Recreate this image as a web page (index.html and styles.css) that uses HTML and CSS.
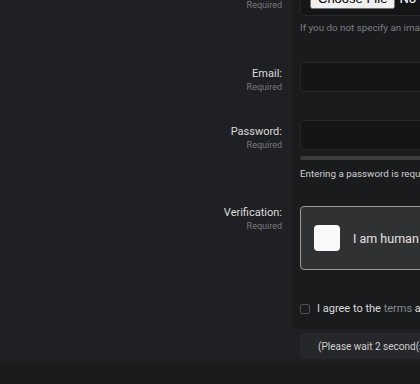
FILE: index.html
```html
<!doctype html>
<html lang="en">
  <head>
    <meta charset="UTF-8" />
    <meta name="viewport" content="width=device-width, initial-scale=1.0" />
    <title>Register</title>
    <link rel="stylesheet" href="styles.css">
  </head>
  <body>
    <div class="page">
      <form class="block-form">
        <div class="form-row">
          <div class="form-label">
            <label for="avatar">Avatar:</label>
            <span class="req">Required</span>
          </div>
          <div class="form-field">
            <div class="file-box">
              <input type="file" id="avatar" name="avatar" />
            </div>
            <p class="hint">If you do not specify an image, a default avatar will be used.</p>
          </div>
        </div>

        <div class="form-row">
          <div class="form-label">
            <label for="email">Email:</label>
            <span class="req">Required</span>
          </div>
          <div class="form-field">
            <input type="email" id="email" class="text-input" />
          </div>
        </div>

        <div class="form-row form-row--pw">
          <div class="form-label">
            <label for="password">Password:</label>
            <span class="req">Required</span>
          </div>
          <div class="form-field">
            <input type="password" id="password" class="text-input" />
            <div class="meter"></div>
            <p class="hint hint--pw">Entering a password is required.</p>
          </div>
        </div>

        <div class="form-row form-row--captcha">
          <div class="form-label form-label--top">
            <label>Verification:</label>
            <span class="req">Required</span>
          </div>
          <div class="form-field">
            <div class="captcha">
              <span class="captcha-check"></span>
              <span class="captcha-text">I am human</span>
            </div>
          </div>
        </div>

        <div class="form-row form-row--agree">
          <div class="form-label"></div>
          <div class="form-field">
            <label class="agree">
              <span class="agree-box"></span>
              <span>I agree to the <a href="#">terms</a> and privacy policy.</span>
            </label>
          </div>
        </div>

        <div class="form-submit">
          <button type="button" class="wait-btn">(Please wait 2 second(s).)</button>
        </div>
      </form>
    </div>
    <div class="footer"></div>
  </body>
</html>
```

FILE: styles.css
```css
* {
  margin: 0;
  padding: 0;
  box-sizing: border-box;
}

body {
  font-family: Roboto, "Liberation Sans", sans-serif;
  background: #1a1b1d;
  color: #d8d8d8;
  overflow: hidden;
  width: 420px;
  height: 384px;
}

.page {
  background: #1f2023;
  margin-top: -34px;
  padding-bottom: 4px;
}

.form-row {
  display: grid;
  grid-template-columns: 292px 1fr;
}

.form-label {
  text-align: right;
  padding: 19px 10px 0 0;
}

.form-label--top {
  padding-top: 14px;
}

.form-label label {
  display: block;
  font-size: 11px;
  line-height: 14px;
  color: #dcdcdc;
}

.req {
  display: block;
  font-size: 9px;
  line-height: 12px;
  color: #777a7e;
}

.form-field {
  background: #1a1b1d;
  padding: 14px 0 14px 8px;
  overflow: hidden;
  white-space: nowrap;
}

/* avatar upload */
.file-box {
  width: 400px;
  height: 36px;
  background: #141517;
  border: 1px solid #27282b;
  border-radius: 4px;
  display: flex;
  align-items: center;
  padding-left: 9px;
}

.file-box input {
  color: #fff;
  font-family: Roboto, "Liberation Sans", sans-serif;
  font-size: 13px;
}

.hint {
  font-size: 9.8px;
  line-height: 12px;
  color: #7b7e82;
  margin-top: 6px;
}

.text-input {
  display: block;
  width: 400px;
  height: 30px;
  background: #141517;
  border: 1px solid #27282b;
  border-radius: 4px;
}

.form-row--pw .form-field {
  padding-bottom: 12px;
}

.meter {
  width: 400px;
  height: 4px;
  margin-top: 6px;
  background: #3b3c3f;
  border-radius: 2px;
}

.hint--pw {
  margin-top: 8px;
  color: #d0d0d0;
}

/* captcha */
.captcha {
  width: 300px;
  height: 64px;
  background: #303133;
  border: 1px solid #9a9a9a;
  border-radius: 4px;
  display: flex;
  align-items: center;
  padding-left: 13px;
  gap: 13px;
}

.captcha-check {
  width: 26px;
  height: 26px;
  background: #f9f9f9;
  border-radius: 4px;
}

.captcha-text {
  font-size: 12.5px;
  color: #e2e2e2;
}

.form-row--agree .form-field {
  padding-bottom: 10px;
}

.agree {
  display: flex;
  align-items: center;
  gap: 7px;
  height: 21px;
  font-size: 11px;
  color: #dcdcdc;
}

.agree a {
  color: #85888c;
  text-decoration: none;
}

.agree-box {
  flex-shrink: 0;
  width: 10px;
  height: 10px;
  border: 1px solid #505256;
  border-radius: 2px;
}

.form-submit {
  margin: 4px 0 0 300px;
}

.wait-btn {
  display: block;
  width: 200px;
  height: 26px;
  background: #26272a;
  border: none;
  border-radius: 3px;
  color: #cfcfcf;
  font-family: Roboto, "Liberation Sans", sans-serif;
  font-size: 10px;
  text-align: left;
  padding-left: 18px;
  white-space: nowrap;
}

.footer {
  height: 40px;
  background: #1a1b1d;
}
```
